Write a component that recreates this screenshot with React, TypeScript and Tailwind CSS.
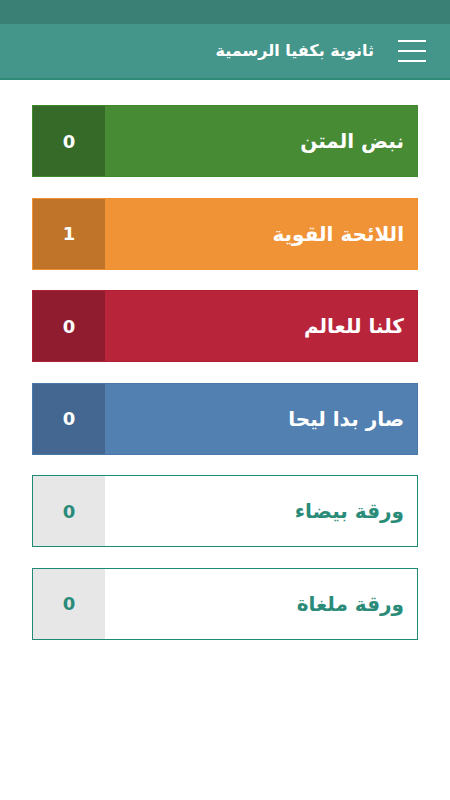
import React from 'react';

type Item = {
  name: string;
  count: number;
  box: string;
  side: string;
  text: string;
  num: string;
};

const items: Item[] = [
  { name: 'نبض المتن', count: 0, box: 'bg-[#478b35] border-[#3f8a2c]', side: 'bg-[#356a29]', text: 'text-white', num: 'text-white' },
  { name: 'اللائحة القوية', count: 1, box: 'bg-[#f09336] border-[#f0902e]', side: 'bg-[#c07429]', text: 'text-white', num: 'text-white' },
  { name: 'كلنا للعالم', count: 0, box: 'bg-[#b8253b] border-[#b01f33]', side: 'bg-[#901c30]', text: 'text-white', num: 'text-white' },
  { name: 'صار بدا ليحا', count: 0, box: 'bg-[#5280b0] border-[#4a78a8]', side: 'bg-[#436790]', text: 'text-white', num: 'text-white' },
  { name: 'ورقة بيضاء', count: 0, box: 'bg-white border-[#1d8a73]', side: 'bg-[#e7e7e7]', text: 'text-[#2a8b79]', num: 'text-[#2a8b79]' },
  { name: 'ورقة ملغاة', count: 0, box: 'bg-white border-[#1d8a73]', side: 'bg-[#e7e7e7]', text: 'text-[#2a8b79]', num: 'text-[#2a8b79]' },
];

const App = () => {
  return (
    <div className="w-[450px] min-h-[800px] bg-white font-['DejaVu_Sans',sans-serif]">
      {/* status bar */}
      <div className="h-6 bg-[#3b8074]"></div>

      {/* app bar */}
      <div className="h-[56px] bg-[#44958a] border-b-2 border-[#2f8a78] flex items-center justify-end pr-6 gap-6">
        <span dir="rtl" className="text-white text-[16px] font-bold">ثانوية بكفيا الرسمية</span>
        <div className="flex flex-col gap-[8px] w-[28px]">
          <div className="h-[2px] bg-white"></div>
          <div className="h-[2px] bg-white"></div>
          <div className="h-[2px] bg-white"></div>
        </div>
      </div>

      <div className="px-8 pt-[25px] flex flex-col gap-[20.6px]">
        {items.map((item, i) => (
          <div key={i} className={`h-[72px] border flex ${item.box}`}>
            <div className={`w-[72px] flex items-center justify-center ${item.side}`}>
              <span className={`text-[18px] font-bold ${item.num}`}>{item.count}</span>
            </div>
            <div className="flex-1 flex items-center justify-end pr-[13px]">
              <span dir="rtl" className={`text-[20px] font-bold ${item.text}`}>{item.name}</span>
            </div>
          </div>
        ))}
      </div>
    </div>
  );
};

export default App;
